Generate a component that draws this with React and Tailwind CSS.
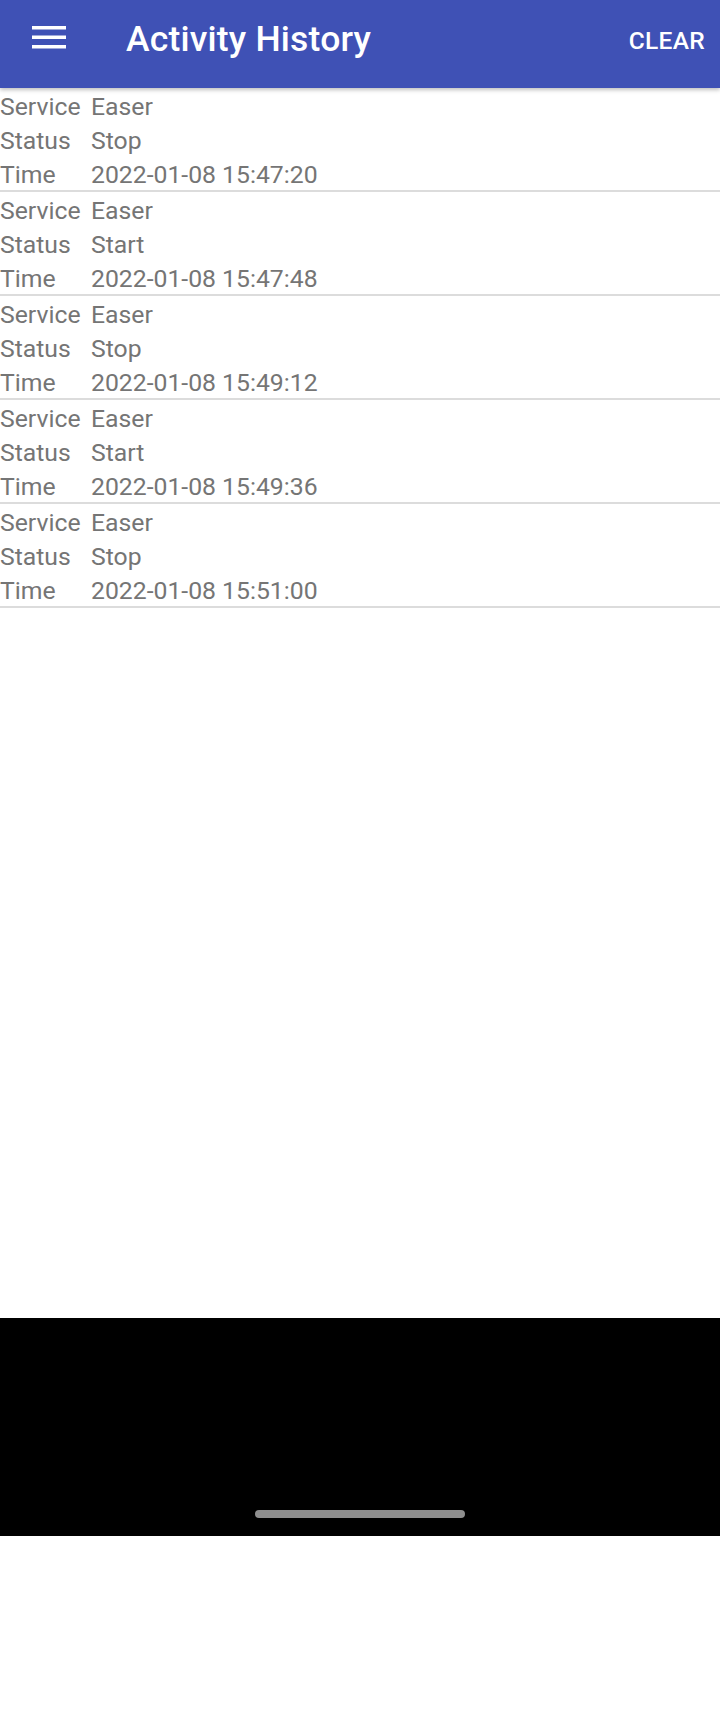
import React from "react";

const entries = [
  { service: "Easer", status: "Stop", time: "2022-01-08 15:47:20" },
  { service: "Easer", status: "Start", time: "2022-01-08 15:47:48" },
  { service: "Easer", status: "Stop", time: "2022-01-08 15:49:12" },
  { service: "Easer", status: "Start", time: "2022-01-08 15:49:36" },
  { service: "Easer", status: "Stop", time: "2022-01-08 15:51:00" },
];

const Row = ({ label, value }) => (
  <div className="flex h-[34px] items-center pt-[3px]">
    <span className="w-[91px] shrink-0">{label}</span>
    <span>{value}</span>
  </div>
);

export default function App() {
  return (
    <div
      className="w-[720px] h-[1712px] bg-white flex flex-col"
      style={{ fontFamily: "Roboto, 'Noto Sans', sans-serif" }}
    >
      <div className="relative z-10 h-[88px] shrink-0 bg-[#3f51b5] flex items-center text-white shadow-[0_2px_4px_rgba(0,0,0,0.25)]">
        <button className="w-[98px] flex items-center pl-[32px] mb-[13px]">
          <svg width="34" height="23" viewBox="0 0 34 23" fill="white">
            <rect x="0" y="0" width="34" height="3.5" />
            <rect x="0" y="9.5" width="34" height="3.5" />
            <rect x="0" y="19" width="34" height="3.5" />
          </svg>
        </button>
        <h1 className="ml-[28px] mb-[8px] text-[35.5px] font-medium tracking-[0.2px]">
          Activity History
        </h1>
        <button className="ml-auto mr-[15px] mb-[6px] text-[24.5px] font-medium tracking-[0.3px]">
          CLEAR
        </button>
      </div>

      <div className="flex-1 text-[24.75px] text-[#757575]">
        {entries.map((e, i) => (
          <div key={i} className="border-b-2 border-[#dcdcdc]">
            <Row label="Service" value={e.service} />
            <Row label="Status" value={e.status} />
            <Row label="Time" value={e.time} />
          </div>
        ))}
      </div>

      <div className="h-[218px] shrink-0 bg-black flex items-end justify-center pb-[18px] mb-[176px]">
        <div className="w-[210px] h-[8px] rounded-full bg-[#8e8e8e]" />
      </div>
    </div>
  );
}
